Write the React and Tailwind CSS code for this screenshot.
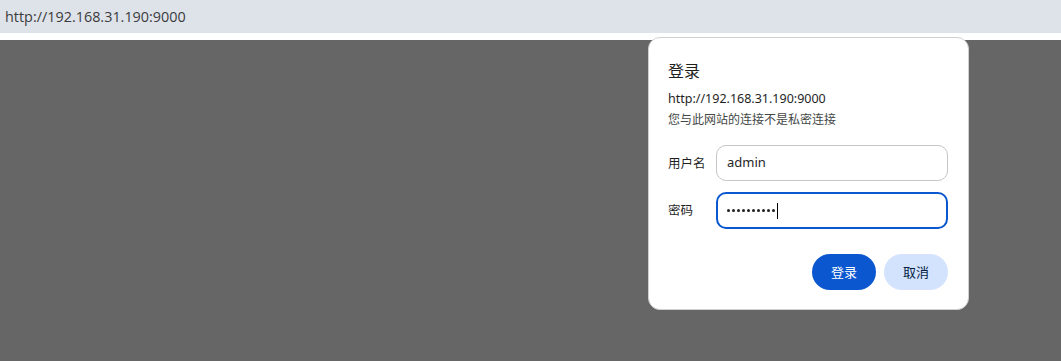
const dots = [0, 1, 2, 3, 4, 5, 6, 7, 8, 9];

export default function App() {
  return (
    <div className="relative w-[1061px] h-[361px] bg-[#666666] overflow-hidden" style={{ fontFamily: '"Noto Sans", "Noto Sans CJK SC", sans-serif' }}>
      {/* address bar */}
      <div className="h-[33px] bg-[#dee3ea] flex items-center px-[5px] text-[14.4px] text-[#3c3c3c]" style={{ fontFamily: '"Open Sans", "Noto Sans", sans-serif' }}>
        http://192.168.31.190:9000
      </div>
      <div className="h-[7px] bg-white" />

      {/* auth dialog */}
      <div className="absolute left-[648px] top-[37px] w-[321px] h-[273px] bg-white rounded-[12px] border border-[#d0d0d0] pt-[20px] pl-[19px] pr-[20px] flex flex-col">
        <div className="text-[16px] leading-[24px] text-[#1f1f1f]" style={{ fontFamily: '"Noto Sans CJK SC", sans-serif' }}>登录</div>
        <div className="mt-[7px] text-[12.5px] leading-[20px] text-[#1f1f1f]">http://192.168.31.190:9000</div>
        <div className="text-[12px] leading-[20px] text-[#444746]" style={{ fontFamily: '"Noto Sans CJK SC", sans-serif' }}>您与此网站的连接不是私密连接</div>

        <div className="mt-[16px] flex items-center">
          <div className="w-[48px] text-[12.5px] text-[#1f1f1f]" style={{ fontFamily: '"Noto Sans CJK SC", sans-serif' }}>用户名</div>
          <div className="flex-1 h-[36px] rounded-[10px] border border-[#c4c7c5] flex items-center pl-[10px] text-[13px] text-[#1f1f1f]">admin</div>
        </div>
        <div className="mt-[11px] flex items-center">
          <div className="w-[48px] text-[12.5px] text-[#1f1f1f]" style={{ fontFamily: '"Noto Sans CJK SC", sans-serif' }}>密码</div>
          <div className="flex-1 h-[37px] rounded-[10px] border-2 border-[#0b57d0] flex items-center pl-[9px]">
            <div className="flex items-center gap-[2px]">
              {dots.map((d) => (
                <span key={d} className="w-[3px] h-[3px] rounded-full bg-[#1f1f1f]" />
              ))}
            </div>
            <span className="ml-[2px] w-px h-[16px] bg-black" />
          </div>
        </div>

        <div className="mt-[25px] flex justify-end gap-[8px]">
          <button className="w-[64px] h-[36px] rounded-full bg-[#0b57d0] text-white text-[13px]" style={{ fontFamily: '"Noto Sans CJK SC", sans-serif' }}>登录</button>
          <button className="w-[64px] h-[36px] rounded-full bg-[#d3e3fd] text-[#041e49] text-[13px]" style={{ fontFamily: '"Noto Sans CJK SC", sans-serif' }}>取消</button>
        </div>
      </div>
    </div>
  );
}
